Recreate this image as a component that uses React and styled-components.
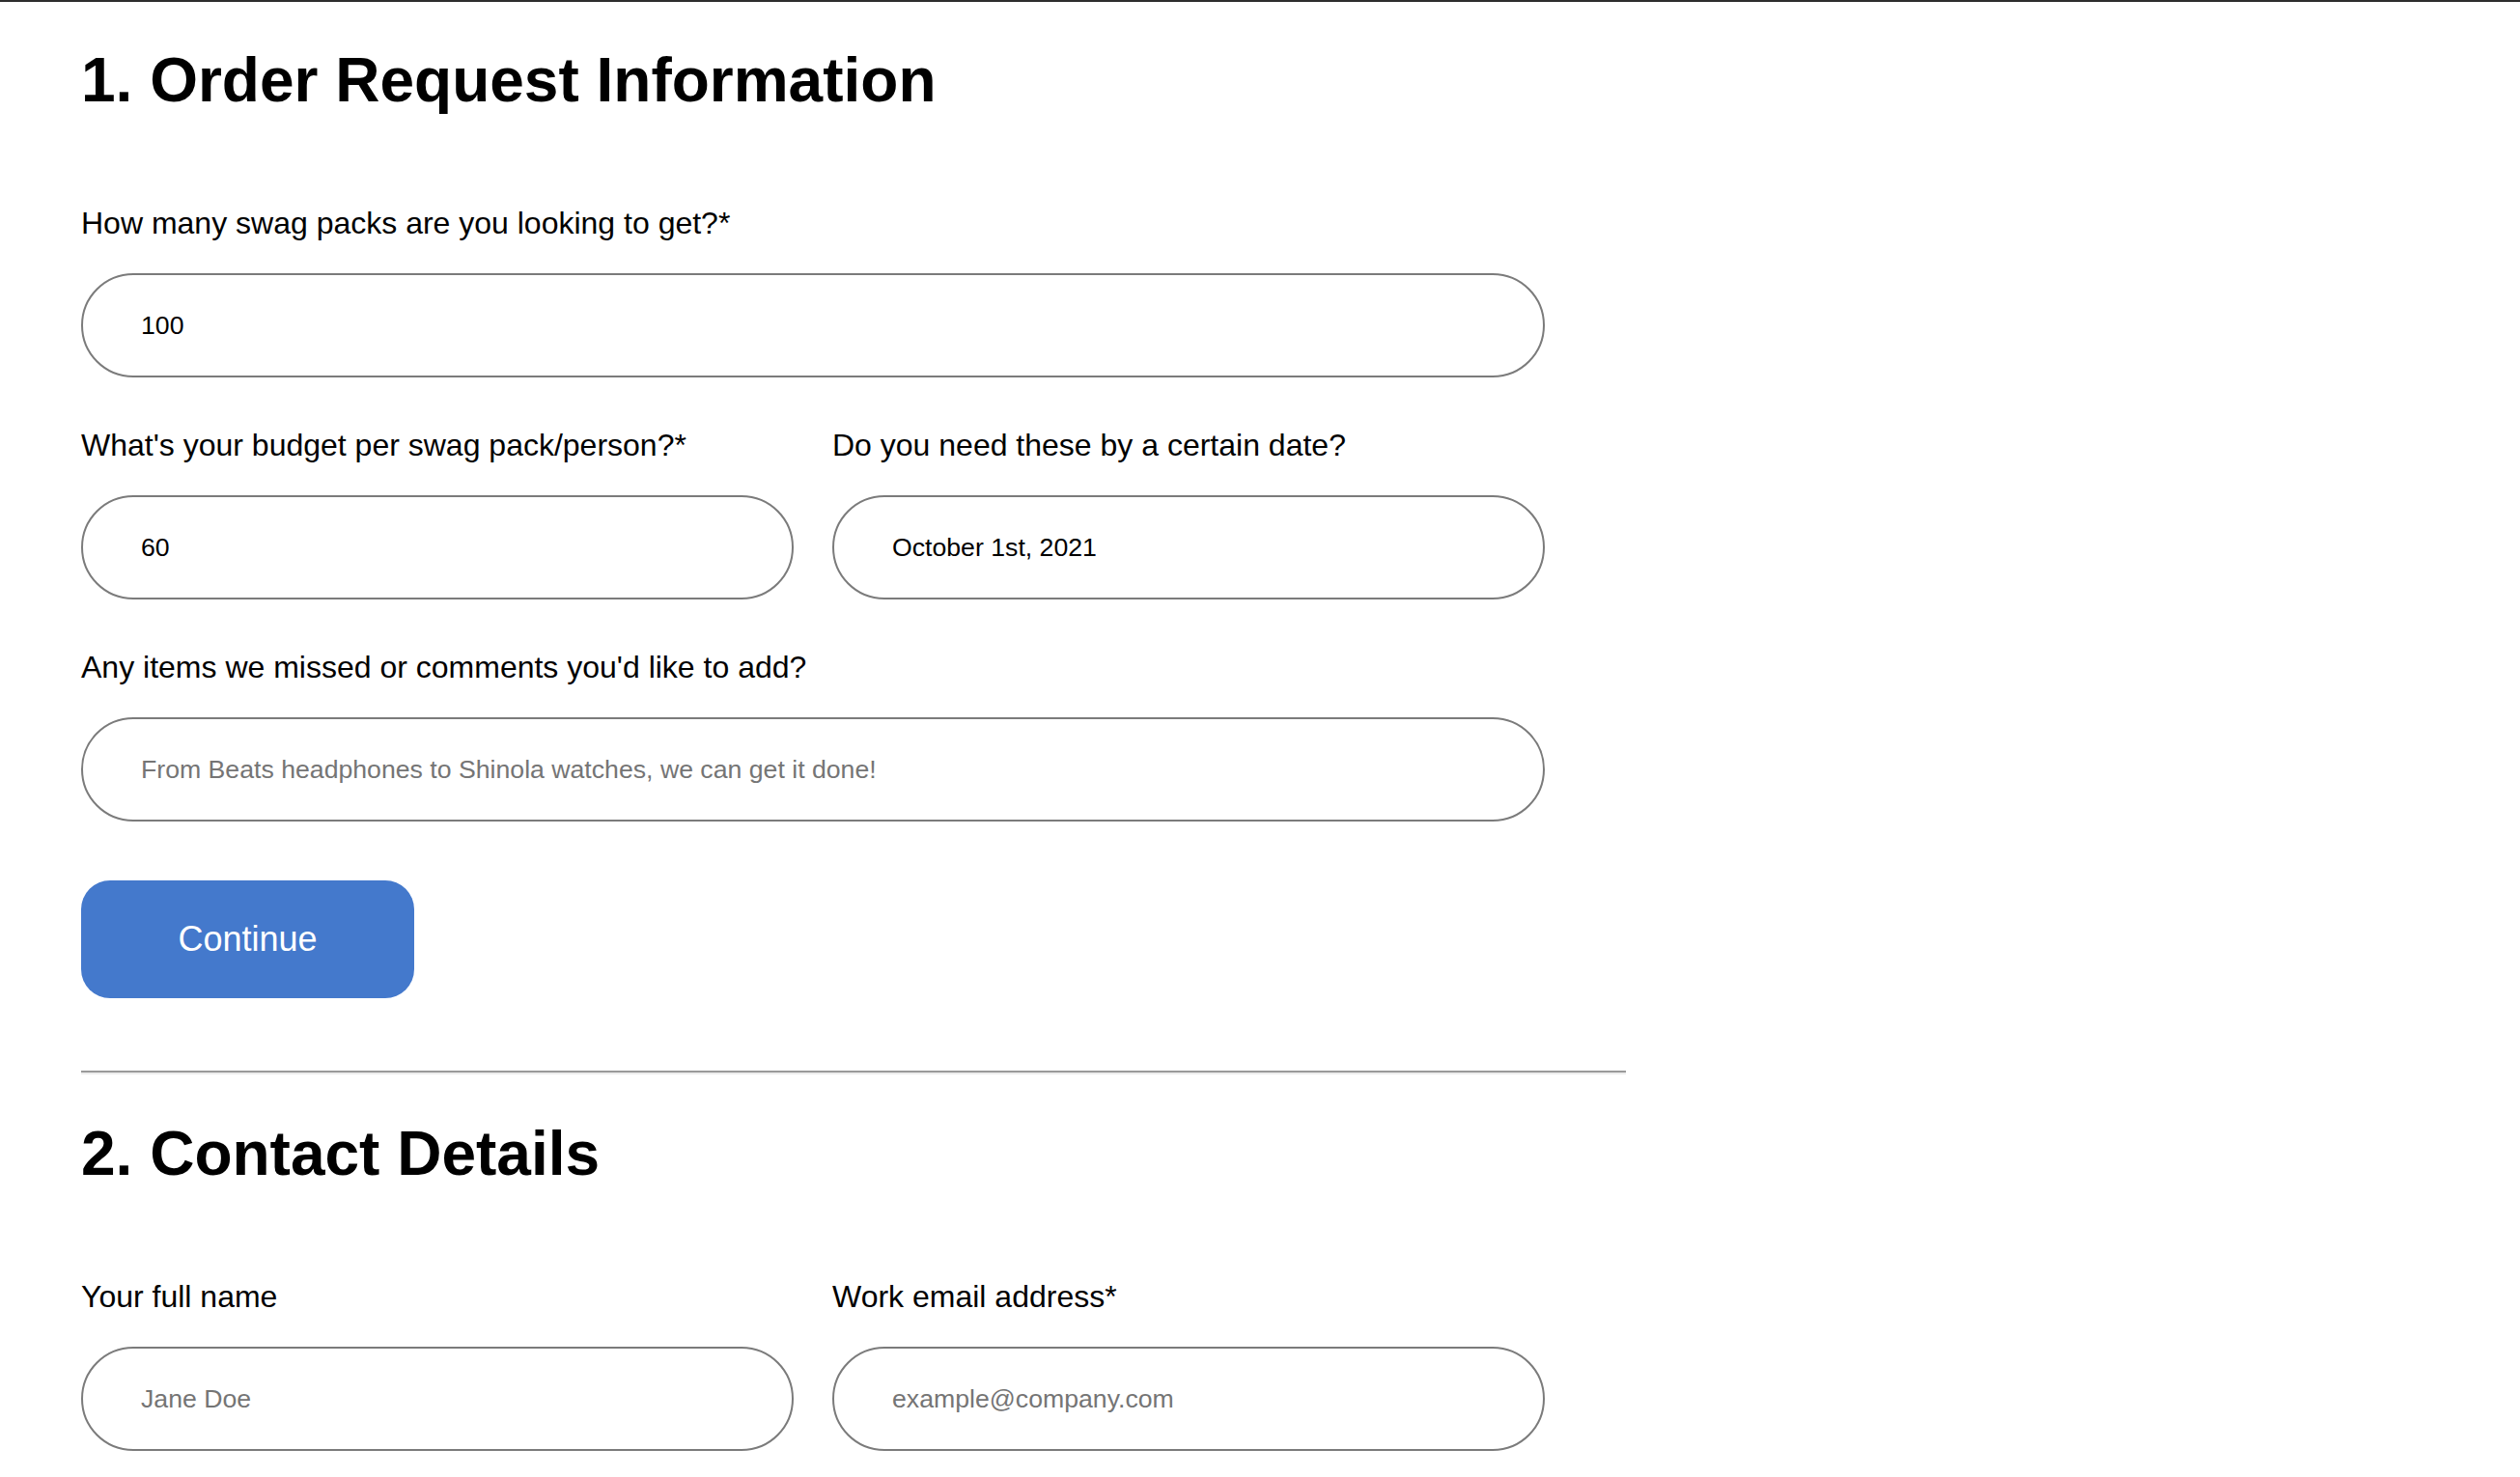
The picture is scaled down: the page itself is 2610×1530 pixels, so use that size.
import React from 'react'
import styled, { createGlobalStyle } from 'styled-components';

const GlobalStyle = createGlobalStyle`
  html, body {
    margin:0;
    padding:0;
    background:#fff;
  }
  body {
    font-family:"Liberation Sans", Arial, sans-serif;
    color:#000;
  }
`

const App = () => {
  return (
    <>
      <GlobalStyle />
      <Page>
        <Form onSubmit={(e) => e.preventDefault()}>
          <Section>
            <Title>1. Order Request Information</Title>
            <Fields>
              <Field>
                <LabelText>How many swag packs are you looking to get?*</LabelText>
                <Input type="text" defaultValue="100" />
              </Field>
              <Row>
                <Field>
                  <LabelText>What's your budget per swag pack/person?*</LabelText>
                  <Input type="text" defaultValue="60" />
                </Field>
                <Field>
                  <LabelText>Do you need these by a certain date?</LabelText>
                  <Input type="text" defaultValue="October 1st, 2021" />
                </Field>
              </Row>
              <Field>
                <LabelText>Any items we missed or comments you'd like to add?</LabelText>
                <Input type="text" placeholder="From Beats headphones to Shinola watches, we can get it done!" />
              </Field>
            </Fields>
            <ContinueBtn type="button">Continue</ContinueBtn>
          </Section>

          <Divider />

          <Section $top={46}>
            <Title>2. Contact Details</Title>
            <Fields>
              <Row>
                <Field>
                  <LabelText>Your full name</LabelText>
                  <Input type="text" placeholder="Jane Doe" />
                </Field>
                <Field>
                  <LabelText>Work email address*</LabelText>
                  <Input type="email" placeholder="example@company.com" />
                </Field>
              </Row>
            </Fields>
          </Section>
        </Form>
      </Page>
    </>
  )
}

const Page = styled.main`
  border-top:2px solid #2e2e2e;
  padding-left:84px;
`
const Form = styled.form`
  width:1600px;
`
const Section = styled.section`
  display:flex;
  flex-direction:column;
  padding-top:${p => p.$top || 45}px;
`
const Title = styled.h2`
  margin:0 0 94px;
  font-size:64px;
  line-height:72px;
  font-weight:700;
  color:#000;
`
const Fields = styled.div`
  display:flex;
  flex-direction:column;
  gap:52px;
  width:1516px;
`
const Row = styled.div`
  display:grid;
  grid-template-columns:1fr 1fr;
  column-gap:40px;
`
const Field = styled.label`
  display:flex;
  flex-direction:column;
  gap:34px;
`
const LabelText = styled.span`
  font-size:32px;
  line-height:36px;
  color:#000;
`
const Input = styled.input`
  box-sizing:border-box;
  width:100%;
  height:108px;
  padding:0 60px;
  border:2px solid #7b7b7b;
  border-radius:54px;
  background:#fff;
  font-family:"Liberation Sans", Arial, sans-serif;
  font-size:26.67px;
  color:#000;
  outline:none;

  &::placeholder {
    color:#757575;
  }
`
const ContinueBtn = styled.button`
  align-self:flex-start;
  margin-top:61px;
  width:345px;
  height:122px;
  border:none;
  border-radius:30px;
  background:#4479cc;
  color:#fff;
  font-family:"Liberation Sans", Arial, sans-serif;
  font-size:36px;
  cursor:pointer;
`
const Divider = styled.hr`
  margin:75px 0 0;
  width:1600px;
  height:0;
  border:none;
  border-top:2px solid #9a9a9a;
  border-bottom:2px solid #ededed;
`

export default App
